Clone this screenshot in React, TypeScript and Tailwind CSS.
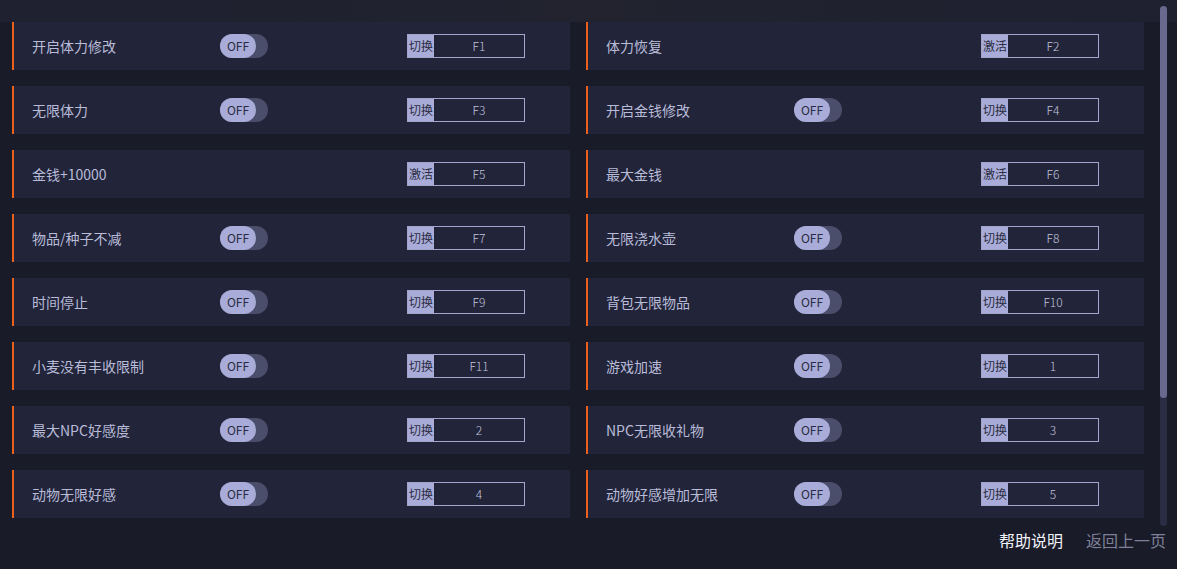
const rows: [Item, Item][] = [
  [
    { label: '开启体力修改', toggle: true, action: '切换', key: 'F1' },
    { label: '体力恢复', toggle: false, action: '激活', key: 'F2' },
  ],
  [
    { label: '无限体力', toggle: true, action: '切换', key: 'F3' },
    { label: '开启金钱修改', toggle: true, action: '切换', key: 'F4' },
  ],
  [
    { label: '金钱+10000', toggle: false, action: '激活', key: 'F5' },
    { label: '最大金钱', toggle: false, action: '激活', key: 'F6' },
  ],
  [
    { label: '物品/种子不减', toggle: true, action: '切换', key: 'F7' },
    { label: '无限浇水壶', toggle: true, action: '切换', key: 'F8' },
  ],
  [
    { label: '时间停止', toggle: true, action: '切换', key: 'F9' },
    { label: '背包无限物品', toggle: true, action: '切换', key: 'F10' },
  ],
  [
    { label: '小麦没有丰收限制', toggle: true, action: '切换', key: 'F11' },
    { label: '游戏加速', toggle: true, action: '切换', key: '1' },
  ],
  [
    { label: '最大NPC好感度', toggle: true, action: '切换', key: '2' },
    { label: 'NPC无限收礼物', toggle: true, action: '切换', key: '3' },
  ],
  [
    { label: '动物无限好感', toggle: true, action: '切换', key: '4' },
    { label: '动物好感增加无限', toggle: true, action: '切换', key: '5' },
  ],
]

type Item = { label: string; toggle: boolean; action: string; key: string }

function Toggle() {
  return (
    <div className="flex h-6 w-12 items-center rounded-full bg-[#4b4e6a]">
      <div className="flex h-6 w-9 items-center justify-center rounded-full bg-[#a9acd8] text-[12px] text-[#2a2c42]">
        OFF
      </div>
    </div>
  )
}

function Card({ item }: { item: Item }) {
  return (
    <div className="flex h-12 items-center border-l-2 border-[#e8601c] bg-[#22243a]">
      <div className="w-[206px] pl-[18px] text-[14px] text-[#b9bcd8]">{item.label}</div>
      <div className="w-[187px]">{item.toggle && <Toggle />}</div>
      <div className="flex h-6 w-[118px] border border-[#a3a6cc]">
        <div className="flex w-[26px] items-center justify-center bg-[#a9acd8] text-[12px] text-[#2a2c42]">
          {item.action}
        </div>
        <div className="flex flex-1 items-center justify-center text-[12px] font-light text-[#c3c5df]">{item.key}</div>
      </div>
    </div>
  )
}

export default function App() {
  return (
    <div
      className="relative h-[569px] w-[1177px] overflow-hidden bg-[#1a1b28]"
      style={{ fontFamily: '"Noto Sans CJK SC", "Noto Sans", sans-serif' }}
    >
      {/* blurred backdrop strip along the top */}
      <div className="pointer-events-none absolute inset-x-0 top-0 h-[22px] bg-gradient-to-r from-[#1f2030] via-[#22232f] to-[#1e2030]" />
      <div className="relative flex">
        <div className="flex w-[1144px] flex-col gap-4 pl-3 pt-[22px]">
          {rows.map((r, i) => (
            <div key={i} className="grid grid-cols-[558px_558px] gap-4">
              <Card item={r[0]} />
              <Card item={r[1]} />
            </div>
          ))}
        </div>
        <div className="ml-4 mt-[6px] flex h-[520px] w-[7px] flex-col rounded-sm bg-[#2a2c44]">
          <div className="h-[392px] rounded-sm bg-[#676a8e]" />
        </div>
      </div>
      <div className="mt-[2px] flex justify-end gap-[23px] pr-[11px] text-[16px]">
        <span className="text-[#f2f3fa]">帮助说明</span>
        <span className="text-[#7d8098]">返回上一页</span>
      </div>
    </div>
  )
}
